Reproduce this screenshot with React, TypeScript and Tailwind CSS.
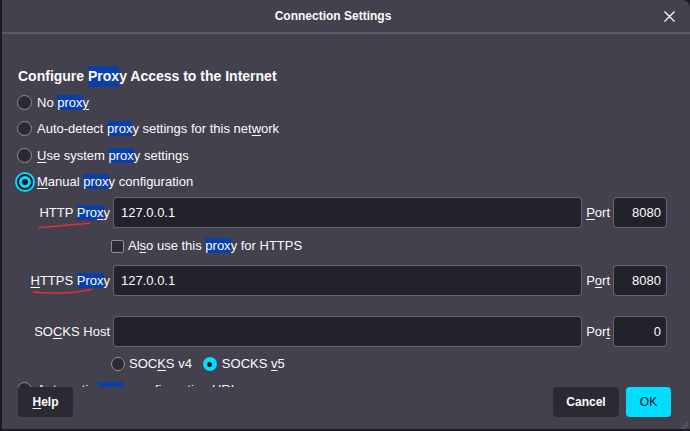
import React from "react";

const HL = ({ children }: { children: React.ReactNode }) => (
  <span className="bg-[#0b3fa8]">{children}</span>
);
const U = ({ children }: { children: React.ReactNode }) => (
  <span className="underline decoration-1 underline-offset-2">{children}</span>
);

function Radio({ kind }: { kind: "off" | "focus" | "on" | "offSmall" }) {
  if (kind === "off")
    return <div className="w-[15px] h-[15px] shrink-0 rounded-full border border-[#8f8f9d] bg-[#2b2a33]" />;
  if (kind === "offSmall")
    return <div className="w-[14px] h-[14px] shrink-0 rounded-full border border-[#8f8f9d] bg-[#2b2a33]" />;
  if (kind === "on")
    return (
      <div className="w-[14px] h-[14px] shrink-0 rounded-full bg-[#00ddff] flex items-center justify-center">
        <div className="w-[5px] h-[5px] rounded-full bg-[#1c1b22]" />
      </div>
    );
  return (
    <div className="w-[15px] h-[15px] shrink-0 flex items-center justify-center">
      <div className="w-[20px] h-[20px] shrink-0 rounded-full border-2 border-[#00ddff] bg-[#1c1b22] flex items-center justify-center">
        <div className="w-[12px] h-[12px] rounded-full bg-[#00ddff] flex items-center justify-center">
          <div className="w-[6px] h-[6px] rounded-full bg-[#1c1b22]" />
        </div>
      </div>
    </div>
  );
}

function Field({ value, right }: { value?: string; right?: boolean }) {
  return (
    <div
      className={
        "h-[31px] rounded-[4px] border border-[#8f8f9d]/60 bg-[#23222b] flex items-center " +
        (right ? "w-[54px] shrink-0 justify-end pr-[5px]" : "flex-1 pl-[7px]")
      }
    >
      {value}
    </div>
  );
}

function ProxyRow({ label, port, value, h }: { label: React.ReactNode; port: React.ReactNode; value?: string; h: string }) {
  return (
    <div className={"flex items-center " + h}>
      <div className="w-[95px] shrink-0 text-right pr-[3px] whitespace-nowrap">{label}</div>
      <Field value={value} />
      <div className="ml-[4px] mr-[3px] whitespace-nowrap">{port}</div>
      <Field value={port === null ? "" : undefined} right />
    </div>
  );
}

export default function App() {
  return (
    <div className="relative w-[690px] h-[431px] bg-[#1c1b22] overflow-hidden font-['Liberation_Sans',Arial,sans-serif] text-[13px] text-[#fbfbfe]">
      <div className="flex flex-col w-full h-full bg-[#42414d] border-l-2 border-b-2 border-[#1c1b22] rounded-tr-[8px]">
        <div className="flex h-[32px] items-center shrink-0">
          <div className="flex-1 text-center font-bold text-[12px]">Connection Settings</div>
          <div className="w-[26px] shrink-0 flex items-center">
            <svg width="11" height="11" viewBox="0 0 11 11">
              <path d="M0.5 0.5 L10.5 10.5 M10.5 0.5 L0.5 10.5" stroke="#fbfbfe" strokeWidth="1.3" />
            </svg>
          </div>
        </div>
        <div className="h-[2px] shrink-0 bg-[#5b5a65]" />
        <div className="flex-1 overflow-hidden pl-[16px] pr-[23px] pt-[29px] flex flex-col">
          <div className="h-[26px] shrink-0 flex items-center font-bold text-[14px]">
            Configure&nbsp;<HL>Prox</HL>y Access to the Internet
          </div>
          <div className="h-[26.5px] shrink-0 flex items-center gap-[5px] -ml-[1px]">
            <Radio kind="off" />
            <span>No <HL>prox</HL><U>y</U></span>
          </div>
          <div className="h-[26.5px] shrink-0 flex items-center gap-[5px] -ml-[1px]">
            <Radio kind="off" />
            <span>Auto-detect <HL>prox</HL>y settings for this net<U>w</U>ork</span>
          </div>
          <div className="h-[26.5px] shrink-0 flex items-center gap-[5px] -ml-[1px]">
            <Radio kind="off" />
            <span><U>U</U>se system <HL>prox</HL>y settings</span>
          </div>
          <div className="h-[26.5px] shrink-0 flex items-center gap-[5px] -ml-[1px]">
            <Radio kind="focus" />
            <span><U>M</U>anual <HL>prox</HL>y configuration</span>
          </div>
          <div className="flex items-center h-[35px] shrink-0">
            <div className="w-[95px] shrink-0 text-right pr-[3px] whitespace-nowrap">HTTP <HL>Pro<U>x</U></HL>y</div>
            <Field value="127.0.0.1" />
            <div className="ml-[4px] mr-[3px] whitespace-nowrap"><U>P</U>ort</div>
            <Field value="8080" right />
          </div>
          <div className="h-[32px] shrink-0 flex items-center pl-[93px] gap-[4px]">
            <div className="w-[13px] h-[13px] shrink-0 rounded-[2px] border border-[#8f8f9d] bg-[#2b2a33]" />
            <span>Al<U>s</U>o use this <HL>prox</HL>y for HTTPS</span>
          </div>
          <div className="flex items-center h-[37px] shrink-0">
            <div className="w-[95px] shrink-0 text-right pr-[3px] whitespace-nowrap"><U>H</U>TTPS <HL>Prox</HL>y</div>
            <Field value="127.0.0.1" />
            <div className="ml-[4px] mr-[3px] whitespace-nowrap">P<U>o</U>rt</div>
            <Field value="8080" right />
          </div>
          <div className="flex items-center h-[35px] mt-[15px] shrink-0">
            <div className="w-[95px] shrink-0 text-right pr-[3px] whitespace-nowrap">SO<U>C</U>KS Host</div>
            <Field value="" />
            <div className="ml-[4px] mr-[3px] whitespace-nowrap">Por<U>t</U></div>
            <Field value="0" right />
          </div>
          <div className="h-[30px] shrink-0 flex items-center pl-[93px]">
            <Radio kind="offSmall" />
            <span className="ml-[4px]">SOC<U>K</U>S v4</span>
            <div className="ml-[11px]"><Radio kind="on" /></div>
            <span className="ml-[5px]">SOCKS <U>v</U>5</span>
          </div>
          <div className="h-[21px] shrink-0 flex items-center gap-[5px] -ml-[1px]">
            <Radio kind="off" />
            <span>Automatic <HL>prox</HL>y configuration URL</span>
          </div>
        </div>
        <div className="h-[42px] shrink-0 flex items-start pl-[16px] pr-[19px]">
          <button className="h-[30px] w-[55px] rounded-[4px] bg-[#2b2a33] font-bold text-[12px]"><U>H</U>elp</button>
          <div className="flex-1" />
          <button className="h-[30px] w-[66px] rounded-[4px] bg-[#2b2a33] font-bold text-[12px]">Cancel</button>
          <button className="h-[30px] w-[45px] ml-[7px] rounded-[4px] bg-[#00ddff] text-[#15141a] text-[12px]">OK</button>
        </div>
      </div>
      <svg className="absolute left-0 top-0 pointer-events-none" width="690" height="431">
        <path d="M39 227.5 C 55 226.2, 74 224.4, 89.5 223.3" stroke="#e0303a" strokeWidth="1.5" fill="none" strokeLinecap="round" />
        <path d="M33.5 292 C 50 294, 75 293.4, 92 289.3" stroke="#e0303a" strokeWidth="1.5" fill="none" strokeLinecap="round" />
        <path d="M681 429 L688 422 M684 429 L688 425" stroke="#6b6a75" strokeWidth="1" />
      </svg>
    </div>
  );
}
